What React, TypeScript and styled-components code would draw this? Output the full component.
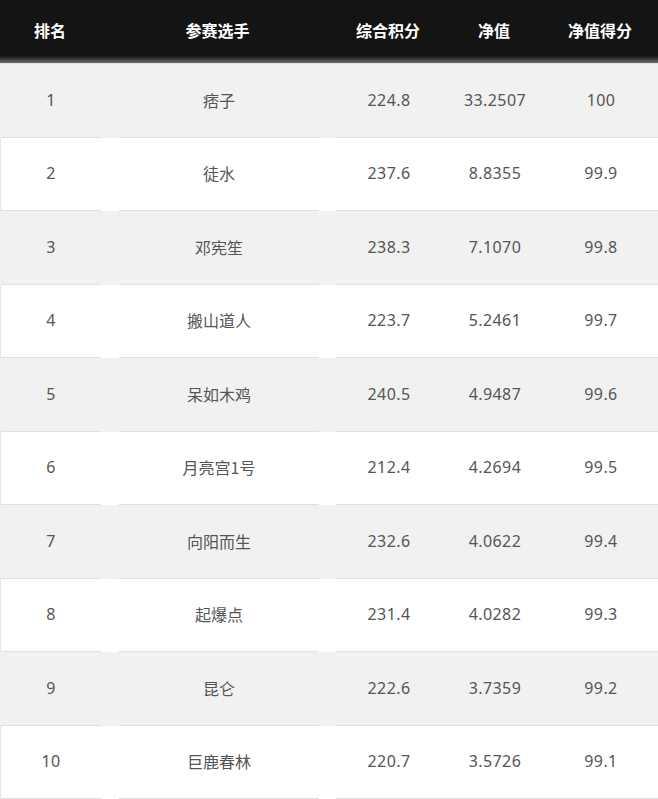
import React, { FC } from 'react';
import styled, { createGlobalStyle } from 'styled-components';

const GlobalStyle = createGlobalStyle`
	html, body {
		margin:0;
		padding:0;
		background:#fff;
	}
	body {
		font-family:"Noto Sans", "Noto Sans CJK SC", sans-serif;
	}
`;

interface IRankRow {
	rank: number;
	name: string;
	score: string;
	nav: string;
	navScore: string;
}

const rows: IRankRow[] = [
	{ rank: 1, name: '痞子', score: '224.8', nav: '33.2507', navScore: '100' },
	{ rank: 2, name: '徒水', score: '237.6', nav: '8.8355', navScore: '99.9' },
	{ rank: 3, name: '邓宪笙', score: '238.3', nav: '7.1070', navScore: '99.8' },
	{ rank: 4, name: '搬山道人', score: '223.7', nav: '5.2461', navScore: '99.7' },
	{ rank: 5, name: '呆如木鸡', score: '240.5', nav: '4.9487', navScore: '99.6' },
	{ rank: 6, name: '月亮宫1号', score: '212.4', nav: '4.2694', navScore: '99.5' },
	{ rank: 7, name: '向阳而生', score: '232.6', nav: '4.0622', navScore: '99.4' },
	{ rank: 8, name: '起爆点', score: '231.4', nav: '4.0282', navScore: '99.3' },
	{ rank: 9, name: '昆仑', score: '222.6', nav: '3.7359', navScore: '99.2' },
	{ rank: 10, name: '巨鹿春林', score: '220.7', nav: '3.5726', navScore: '99.1' },
];

// rank | gap | player | gap | score | nav | nav score | edge
const columns = '100px 18px 200px 17px 106px 106px 106px 5px';

const StyledTable = styled.div`
	width:658px;
	display:flex;
	flex-direction:column;
`;

const StyledHead = styled.div`
	display:grid;
	grid-template-columns:${columns};
	height:64px;
	align-items:center;
	background:linear-gradient(to bottom, #141414 0, #141414 56px, #3a3a3a 59px, #6e6e6e 63px);
	border-bottom:1px solid #dfe1e6;
	box-sizing:border-box;
`;

const StyledHeadCell = styled.div<{ $span?: number }>`
	grid-column:span ${props => props.$span || 1};
	text-align:center;
	color:#fff;
	font-family:"Noto Sans CJK SC", sans-serif;
	font-weight:700;
	font-size:16px;
	padding-bottom:3px;
`;

const StyledRow = styled.div<{ $striped: boolean }>`
	display:grid;
	grid-template-columns:${columns};
	height:73.5px;
	background:${props => props.$striped ? '#f1f1f1' : '#fff'};
	border-left:1px solid ${props => props.$striped ? '#f1f1f1' : '#e6e6e6'};
	box-sizing:border-box;
`;

const StyledCell = styled.div<{ $line?: boolean }>`
	display:flex;
	align-items:center;
	justify-content:center;
	color:#555;
	font-size:16px;
	letter-spacing:0.4px;
	border-bottom:1px solid ${props => props.$line === false ? 'transparent' : '#dedfe3'};
	box-sizing:border-box;
	padding-bottom:1px;
`;

const StyledName = styled(StyledCell)`
	font-family:"Noto Sans CJK SC", sans-serif;
	font-size:16px;
	letter-spacing:0;
`;

const RankTable: FC = () => (
	<StyledTable>
		<StyledHead>
			<StyledHeadCell>排名</StyledHeadCell>
			<StyledHeadCell $span={3}>参赛选手</StyledHeadCell>
			<StyledHeadCell>综合积分</StyledHeadCell>
			<StyledHeadCell>净值</StyledHeadCell>
			<StyledHeadCell>净值得分</StyledHeadCell>
		</StyledHead>
		{rows.map((r, i) => (
			<StyledRow key={'row' + r.rank} $striped={i % 2 === 0}>
				<StyledCell>{r.rank}</StyledCell>
				<StyledCell $line={false} />
				<StyledName>{r.name}</StyledName>
				<StyledCell $line={false} />
				<StyledCell>{r.score}</StyledCell>
				<StyledCell>{r.nav}</StyledCell>
				<StyledCell>{r.navScore}</StyledCell>
				<StyledCell />
			</StyledRow>
		))}
	</StyledTable>
);

const App: FC = () => (
	<>
		<GlobalStyle />
		<RankTable />
	</>
);

export default App;
